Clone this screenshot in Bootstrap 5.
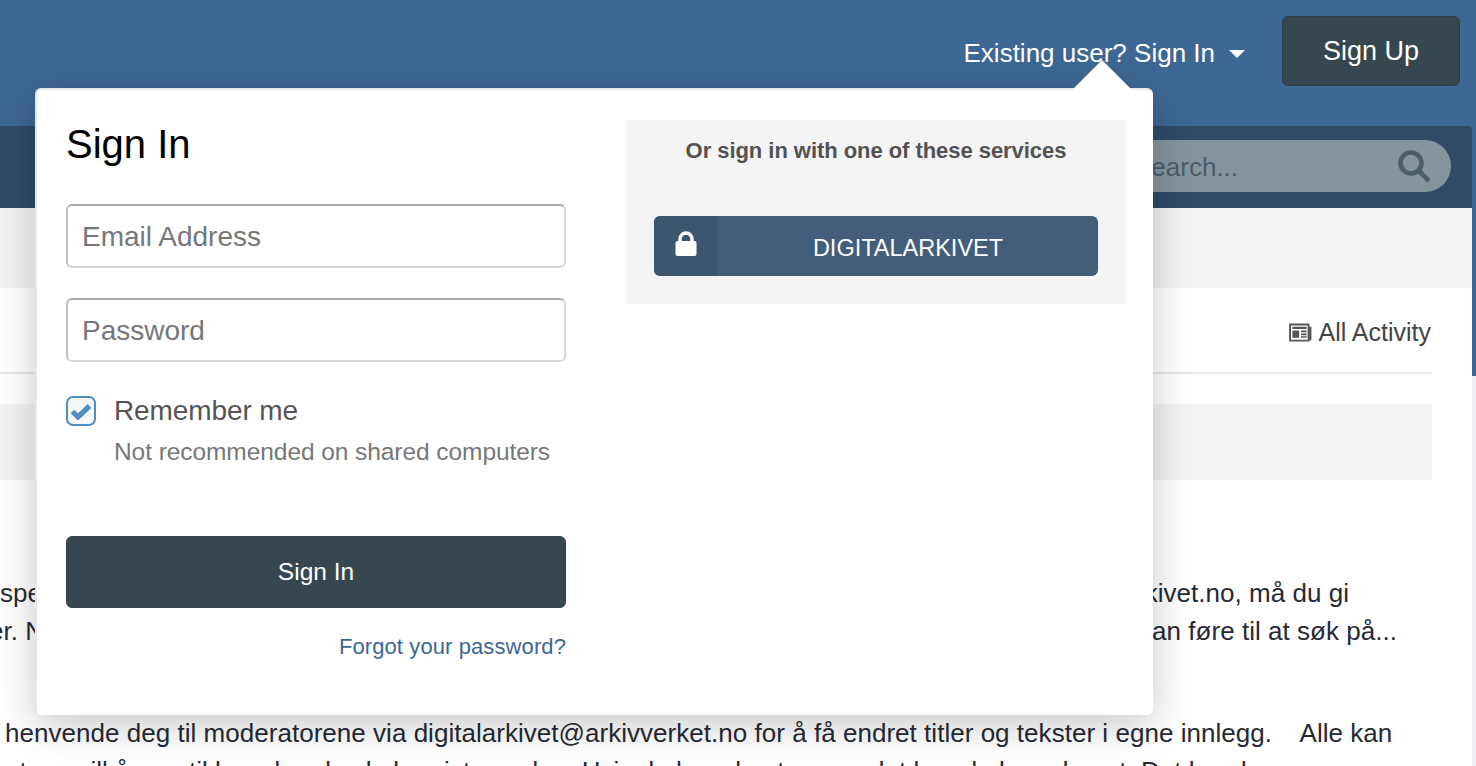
<!DOCTYPE html>
<html lang="no">
<head>
<meta charset="utf-8">
<title>Sign In</title>
<link href="https://cdn.jsdelivr.net/npm/bootstrap@5.3.0/dist/css/bootstrap.min.css" rel="stylesheet">
<style>
html,body{height:766px;overflow:hidden}
body{font-family:"Liberation Sans",Arial,sans-serif;background:linear-gradient(#3d6794 376px,#edeff5 376px);color:#272a34;width:1476px;position:relative}
.page-shell{width:1472px;background:linear-gradient(#3d6794 208px,#fff 208px);height:766px;overflow:hidden}
.top-band{height:126px;background:#3d6794;padding:16px 12px 0 0}
.user-link{color:#fff;font-size:26px;text-decoration:none;margin-right:37px;line-height:74px}
.user-caret{display:inline-block;border:8.500px solid transparent;border-top-color:#fff;border-bottom:0;margin-left:14px;vertical-align:middle;position:relative;top:-1px}
.signup-btn{background:#37474f;color:#fff;font-size:27px;width:178px;height:70px;border:1px solid #2f3e46;border-radius:6px;line-height:69px;padding:0;text-align:center;--bs-btn-hover-bg:#37474f}
.nav-band{height:82px;background:#2f4b66;padding:14px 21px 0 0;border-top-right-radius:4px}
.search-pill{width:400px;height:52px;border-radius:0 26px 26px 0;background:#84959f;color:#4a5d6c;font-size:26px;padding-left:83px;padding-right:21px}
.search-word{padding-top:2px}
.sub-band{height:80px;background:#f3f3f3}
.crumb-row{height:86px;width:1432px;border-bottom:2px solid #e9e9e9;color:#444;font-size:25px;padding-top:26px;padding-right:1px;line-height:36px}
.crumb-row svg{margin-right:6px;vertical-align:-1px}
.grey-strip{height:76px;width:1432px;margin-top:30px;background:#f3f3f3}
.post-text{font-size:26px;line-height:38px;white-space:nowrap;margin:0;letter-spacing:.03px}
.para-one{margin-top:94px}
.line-upper{padding-right:123px}
.line-lower{padding-right:75px}
.line-lower-start{margin-left:-11px}
.para-two{margin-top:64px;padding-left:5px}
.signin-pop{position:absolute;left:35px;top:88px;width:1118px;height:627px;background:#fff;border:solid #e8e8e8;border-width:2px 0 0 2px;border-radius:6px;box-shadow:0 10px 40px rgba(0,0,0,.22);padding:29px 27px 0 29px}
.signin-pop::before{content:"";position:absolute;left:1035px;top:-30px;width:0;height:0;border:30px solid transparent;border-bottom-color:#fff;border-top:0}
.pop-left{width:500px}
.pop-title{font-size:40px;line-height:50px;color:#000;font-weight:400;margin:0 0 35px}
.pop-input{height:64px;font-size:28px;border:2px solid #d6d6d6;border-top-color:#a8a8a8;border-left-color:#c0c0c0;border-right-color:#d6d6d6;border-radius:6px;padding:2px 14px 0;margin-bottom:30px;color:#777;box-shadow:none}
.pop-input::placeholder{color:#777;opacity:1}
.check-box{flex:none;width:30px;height:30px;border:2px solid #4f8fc4;border-radius:7px;background:#f8f8f8;display:flex;align-items:center;justify-content:center;margin-right:18px}
.remember-row{margin-top:34px}
.remember-label{font-size:28px;line-height:30px;color:#555;letter-spacing:-.1px}
.remember-note{font-size:24.500px;line-height:34px;margin-top:9px;color:#777;letter-spacing:-.07px}
.signin-btn{width:500px;height:72px;background:#37474f;border-color:#37474f;color:#fff;font-size:24.500px;border-radius:6px;margin-top:67px;--bs-btn-hover-bg:#37474f}
.forgot-link{display:block;text-align:right;font-size:22px;line-height:30px;margin-top:24px;color:#3d6794;letter-spacing:.1px;text-decoration:none}
.services-box{width:500px;height:184px;background:#f4f4f4;padding:15px 28px 0;margin-top:1px}
.services-title{font-size:22px;font-weight:700;color:#525252;line-height:32px;text-align:center;margin:0 0 49px;letter-spacing:-.05px}
.service-btn{height:60px;background:#435d7b;color:#fff;border-radius:6px;overflow:hidden;font-size:23.500px}
.service-icon{width:64px;background:#3d566f;display:flex;justify-content:center;padding-top:15px}
.service-name{line-height:64px}
</style>
</head>
<body>
<div class="page-shell">
  <div class="top-band d-flex justify-content-end align-items-start">
    <a class="user-link" href="#">Existing user? Sign In<span class="user-caret"></span></a>
    <a class="btn signup-btn" href="#">Sign Up</a>
  </div>
  <div class="nav-band d-flex justify-content-end">
    <div class="search-pill d-flex justify-content-between align-items-center">
      <span class="search-word">Search...</span>
      <svg width="32" height="32" viewBox="0 0 32 32" fill="none" stroke="#4a5d6c" stroke-width="4.600" stroke-linecap="round"><circle cx="13" cy="13" r="10.500"/><path d="M21 21 29.500 29.500"/></svg>
    </div>
  </div>
  <div class="sub-band"></div>
  <div class="crumb-row d-flex justify-content-end">
    <span><svg width="23" height="19" viewBox="0 0 24 20"><path d="M1 1.500h19.500v17H1z" fill="#fff" stroke="#555" stroke-width="2"/><path d="M21 4h2.500v13a1.500 1.500 0 0 1-1.500 1.500H21z" fill="#555"/><path d="M3.500 4h15v2.200h-15zM3.500 8h7v7.500h-7zM12.500 8h6v1.800h-6zM12.500 11h6v1.800h-6zM12.500 14h6v1.500h-6z" fill="#555"/></svg>All Activity</span>
  </div>
  <div class="grey-strip"></div>
  <div class="para-one">
    <div class="post-text line-upper d-flex justify-content-between"><span>spe</span><span>kivet.no, må du gi</span></div>
    <div class="post-text line-lower d-flex justify-content-between"><span class="line-lower-start">er. N</span><span>an føre til at søk på...</span></div>
  </div>
  <div class="post-text para-two">henvende deg til moderatorene via digitalarkivet@arkivverket.no for å få endret titler og tekster i egne innlegg. &nbsp;&nbsp; Alle kan<br>et om vilkårene til hvordan du skal registrere deg. Hvis du har glemt passordet kan du lese deg ut. Det hender</div>
</div>

<div class="signin-pop d-flex justify-content-between">
  <form class="pop-left" onsubmit="return false">
    <h2 class="pop-title">Sign In</h2>
    <input class="form-control pop-input" type="email" placeholder="Email Address">
    <input class="form-control pop-input" type="password" placeholder="Password">
    <div class="d-flex remember-row">
      <span class="check-box"><svg width="22" height="17" viewBox="0 0 22 17"><path d="M2.500 8.500 8 14 19.500 3" fill="none" stroke="#4f8fc4" stroke-width="5.200"/></svg></span>
      <div>
        <div class="remember-label">Remember me</div>
        <div class="remember-note">Not recommended on shared computers</div>
      </div>
    </div>
    <button class="btn signin-btn d-block" type="submit">Sign In</button>
    <a class="forgot-link" href="#">Forgot your password?</a>
  </form>
  <div class="services-box">
    <p class="services-title">Or sign in with one of these services</p>
    <div class="service-btn d-flex">
      <span class="service-icon"><svg width="22" height="26" viewBox="0 0 22 26"><path d="M5 11V8a6 6 0 0 1 12 0v3" fill="none" stroke="#fff" stroke-width="3.400"/><rect x="0.500" y="10" width="21" height="15" rx="2" fill="#fff"/></svg></span>
      <span class="service-name flex-grow-1 text-center">DIGITALARKIVET</span>
    </div>
  </div>
</div>
<script src="https://cdn.jsdelivr.net/npm/bootstrap@5.3.0/dist/js/bootstrap.bundle.min.js"></script>
</body>
</html>
